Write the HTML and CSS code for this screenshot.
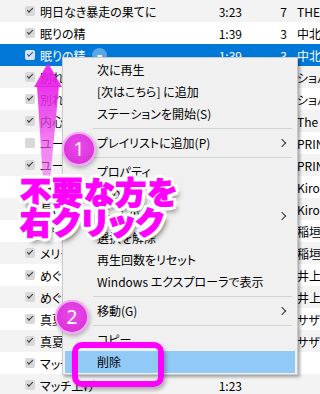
FILE: index.html
```html
<!DOCTYPE html>
<html lang="ja">
<head>
    <meta charset="UTF-8">
    <meta name="viewport" content="width=device-width, initial-scale=1.0">
    <title>不要な方を右クリック</title>
    <link rel="stylesheet" href="styles.css">
</head>
<body>
    <div class="stage">
        <div class="list">
            <div class="row alt"><span class="cb on"></span><span class="title">明日なき暴走の果てに</span><span class="time">3:23</span><span class="num">7</span><span class="artist">THE BLUE HEARTS</span></div>
            <div class="row"><span class="cb on"></span><span class="title">眠りの精</span><span class="time">1:39</span><span class="num">3</span><span class="artist">中北千枝子</span></div>
            <div class="row sel"><span class="cb on"></span><span class="title">眠りの精 <span class="more">•••</span></span><span class="time">1:39</span><span class="num">3</span><span class="artist">中北千枝子</span></div>
            <div class="row alt"><span class="cb on"></span><span class="title">別れの曲</span><span class="time">4:12</span><span class="num">1</span><span class="artist">ショパン</span></div>
            <div class="row"><span class="cb on"></span><span class="title">別れの曲</span><span class="time">4:12</span><span class="num">1</span><span class="artist">ショパン</span></div>
            <div class="row alt"><span class="cb on"></span><span class="title">内心</span><span class="time">3:50</span><span class="num">2</span><span class="artist">The Jets</span></div>
            <div class="row"><span class="cb"></span><span class="title">ユー</span><span class="time">4:01</span><span class="num">5</span><span class="artist">PRINCESS PRINCESS</span></div>
            <div class="row alt"><span class="cb on"></span><span class="title">ユー</span><span class="time">4:01</span><span class="num">5</span><span class="artist">PRINCESS PRINCESS</span></div>
            <div class="row"><span class="cb on"></span><span class="title">長い間</span><span class="time">5:02</span><span class="num">1</span><span class="artist">Kiroro</span></div>
            <div class="row alt"><span class="cb on"></span><span class="title">長い間</span><span class="time">5:02</span><span class="num">1</span><span class="artist">Kiroro</span></div>
            <div class="row"><span class="cb on"></span><span class="title">クリスマス</span><span class="time">4:40</span><span class="num">4</span><span class="artist">稲垣潤一</span></div>
            <div class="row alt"><span class="cb on"></span><span class="title">メリー</span><span class="time">4:40</span><span class="num">4</span><span class="artist">稲垣潤一</span></div>
            <div class="row"><span class="cb on"></span><span class="title">めぐり逢い</span><span class="time">4:18</span><span class="num">6</span><span class="artist">井上陽水</span></div>
            <div class="row alt"><span class="cb on"></span><span class="title">めぐり逢い</span><span class="time">4:18</span><span class="num">6</span><span class="artist">井上陽水</span></div>
            <div class="row"><span class="cb on"></span><span class="title">真夏の果実</span><span class="time">4:47</span><span class="num">2</span><span class="artist">サザンオールスターズ</span></div>
            <div class="row alt"><span class="cb on"></span><span class="title">真夏の果実</span><span class="time">4:47</span><span class="num">2</span><span class="artist">サザンオールスターズ</span></div>
            <div class="row"><span class="cb on"></span><span class="title">マッチ</span><span class="time">1:23</span><span class="num"></span><span class="artist"></span></div>
            <div class="row alt"><span class="cb on"></span><span class="title">マッチ上げ</span><span class="time">1:23</span><span class="num"></span><span class="artist"></span></div>
        </div>

        <div class="menu">
            <div class="item">次に再生</div>
            <div class="item">[次はこちら] に追加</div>
            <div class="item">ステーションを開始(S)</div>
            <div class="sep"></div>
            <div class="item sub">プレイリストに追加(P)</div>
            <div class="sep"></div>
            <div class="item">プロパティ</div>
            <div class="item">曲の情報</div>
            <div class="item sub">レート(I)</div>
            <div class="item">選択を解除</div>
            <div class="item">再生回数をリセット</div>
            <div class="item">Windows エクスプローラで表示</div>
            <div class="sep"></div>
            <div class="item sub">移動(G)</div>
            <div class="sep"></div>
            <div class="item">コピー</div>
            <div class="item hot">削除</div>
        </div>

        <!-- 注釈 -->
        <svg class="arrow" width="100" height="190" viewBox="0 0 100 190">
            <defs>
                <linearGradient id="shaft" x1="0" y1="0" x2="0" y2="1">
                    <stop offset="0" stop-color="#e81ee8" stop-opacity="0.9"/>
                    <stop offset="1" stop-color="#f06af0" stop-opacity="0.6"/>
                </linearGradient>
            </defs>
            <polygon points="37,86 59,86 50,180 43,180" fill="url(#shaft)"/>
            <polygon points="48,63 34,87 62,87" fill="#e81ee8" fill-opacity="0.92"/>
        </svg>
        <div class="badge b1">1</div>
        <div class="badge b2">2</div>
        <div class="caption">不要な方を<br>右クリック</div>
        <div class="mark"></div>
    </div>
</body>
</html>
```

FILE: styles.css
```css
* {
    box-sizing: border-box;
}
body {
    margin: 0;
    background: #fff;
    font-family: "Noto Sans CJK JP", "Noto Sans", sans-serif;
    font-feature-settings: "palt" 1;
    font-size: 12px;
    color: #000;
}
.stage {
    position: relative;
    width: 320px;
    height: 394px;
    overflow: hidden;
}
.row {
    display: grid;
    grid-template-columns: 40px 160px 42px 45px 33px;
    align-items: center;
    height: 22px;
    background: #fff;
    white-space: nowrap;
}
.row.alt {
    background: #f3f3f3;
}
.row.sel {
    background: #0078d7;
    color: #fff;
}
.cb {
    display: block;
    width: 10px;
    height: 10px;
    margin-left: 25px;
    background: #d8d8da;
    border-radius: 2px;
}
.cb.on::after {
    content: "";
    display: block;
    width: 5px;
    height: 2px;
    margin: 2px 0 0 2px;
    border-left: 1.5px solid #333;
    border-bottom: 1.5px solid #333;
    transform: rotate(-45deg);
}
.sel .cb {
    background: #d4e2f4;
}
.sel .cb.on::after {
    border-color: #2d5d92;
}
.title {
    overflow: hidden;
    display: flex;
    align-items: center;
}
.more {
    display: inline-flex;
    align-items: center;
    justify-content: center;
    width: 15px;
    height: 15px;
    margin-left: 6px;
    border-radius: 50%;
    background: rgba(255, 255, 255, 0.35);
    font-size: 7px;
    letter-spacing: -1px;
}
.time, .num {
    text-align: right;
}
.artist {
    padding-left: 10px;
    overflow: hidden;
}

.menu {
    position: absolute;
    left: 62px;
    top: 57px;
    width: 236px;
    padding: 1px 2px;
    background: #f0f0f0;
    border: 1px solid #cacaca;
    box-shadow: 2px 2px 3px rgba(0, 0, 0, 0.35);
}
.menu .item {
    position: relative;
    height: 22px;
    line-height: 22px;
    padding-left: 32px;
    white-space: nowrap;
}
.menu .sub::after {
    content: "";
    position: absolute;
    right: 10px;
    top: 8px;
    width: 5px;
    height: 5px;
    border-right: 1px solid #333;
    border-top: 1px solid #333;
    transform: rotate(45deg);
}
.menu .hot {
    background: #91c9f7;
}
.menu .sep {
    height: 7px;
    margin: 0 3px 0 28px;
    background: linear-gradient(#d3d3d3, #d3d3d3) center / 100% 1px no-repeat;
}

.arrow {
    position: absolute;
    left: 0;
    top: 0;
}
.badge {
    position: absolute;
    width: 34px;
    height: 34px;
    border-radius: 50%;
    background: radial-gradient(circle at 50% 40%, #e94ce9, #d62ad6);
    border: 2px solid #f3a6f3;
    box-shadow: 1px 2px 4px rgba(0, 0, 0, 0.3);
    color: #fff;
    font-family: "Noto Sans", sans-serif;
    font-size: 19px;
    line-height: 30px;
    text-align: center;
}
.b1 {
    left: 62px;
    top: 132px;
}
.b2 {
    left: 55px;
    top: 300px;
}
.caption {
    position: absolute;
    left: 20px;
    top: 176px;
    font-size: 31px;
    line-height: 30px;
    font-weight: 900;
    letter-spacing: 1px;
    color: #ff00ff;
    -webkit-text-stroke: 1.2px #ff00ff;
    white-space: nowrap;
    text-shadow:
        4px 0 0 #fff, -4px 0 0 #fff, 0 4px 0 #fff, 0 -4px 0 #fff,
        3px 3px 0 #fff, -3px 3px 0 #fff, 3px -3px 0 #fff, -3px -3px 0 #fff,
        4px 5px 5px rgba(0, 0, 0, 0.5);
}
.mark {
    position: absolute;
    left: 72px;
    top: 342px;
    width: 92px;
    height: 45px;
    border: 6px solid #ff00ff;
    border-radius: 10px;
    box-shadow: 2px 3px 4px rgba(0, 0, 0, 0.3);
}
```
